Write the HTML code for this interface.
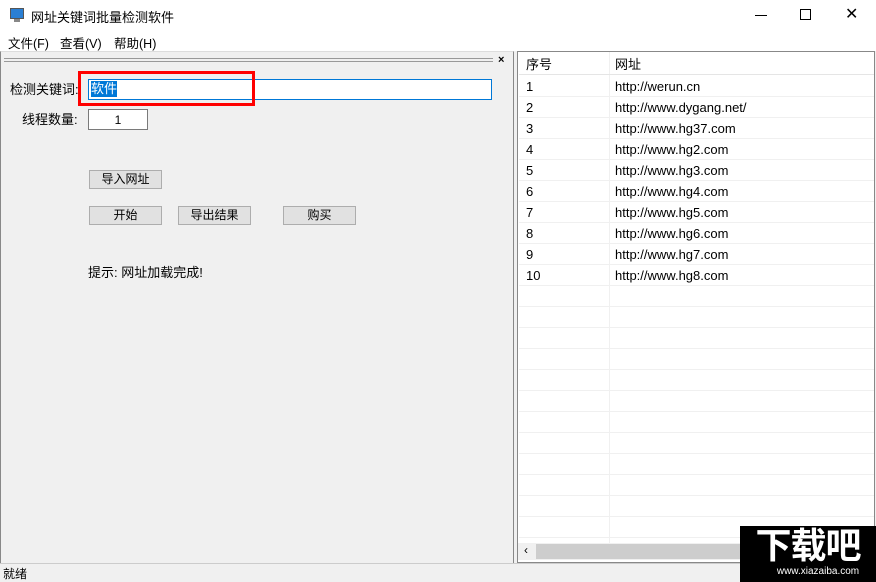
<!DOCTYPE html><html><head><meta charset="utf-8"><style>
*{margin:0;padding:0;box-sizing:border-box}
body{width:876px;height:582px;overflow:hidden;background:#f0f0f0;font-family:"Liberation Sans","Noto Sans CJK SC",sans-serif;font-size:12px;color:#000;position:relative}
.a{position:absolute}
.btn{position:absolute;background:#e1e1e1;border:1px solid #adadad;text-align:center;line-height:17px;font-size:12px;height:19px;width:73px}
.row{position:absolute;left:519px;width:355px;height:21px;border-bottom:1px solid #f0f0f0;font-size:13px;line-height:21px}
.row span{position:absolute;left:7px}.row b{font-weight:normal;position:absolute;left:96px}
</style></head><body>
<div class="a" style="left:0;top:0;width:876px;height:32px;background:#fff"></div>
<div class="a" style="left:10px;top:8px;width:14px;height:11px;background:#2a7fd4;border:1px solid #555"></div>
<div class="a" style="left:14px;top:19px;width:6px;height:3px;background:#888"></div>
<div class="a" style="left:31px;top:7px;font-size:13px">网址关键词批量检测软件</div>
<div class="a" style="left:755px;top:15px;width:12px;height:1px;background:#000"></div>
<div class="a" style="left:800px;top:9px;width:11px;height:11px;border:1px solid #000"></div>
<div class="a" style="left:845px;top:4px;font-size:16px;font-weight:300">✕</div>
<div class="a" style="left:0;top:32px;width:876px;height:19px;background:#fff"></div>
<div class="a" style="left:8px;top:33px;font-size:12.5px">文件(F)</div>
<div class="a" style="left:60px;top:33px;font-size:12.5px">查看(V)</div>
<div class="a" style="left:114px;top:33px;font-size:12.5px">帮助(H)</div>
<div class="a" style="left:0;top:51px;width:514px;height:512px;border-left:1px solid #888;border-right:1px solid #888;border-top:1px solid #ddd"></div>
<div class="a" style="left:4px;top:58px;width:489px;height:4px;border-top:1px solid #999;border-bottom:1px solid #999"></div>
<div class="a" style="left:498px;top:54px;font-size:11px;font-weight:bold">×</div>
<div class="a" style="left:10px;top:79px;font-size:13px">检测关键词:</div>
<div class="a" style="left:88px;top:79px;width:404px;height:21px;background:#fff;border:1px solid #0078d7"></div>
<div class="a" style="left:91px;top:81px;height:16px;line-height:16px;background:#0078d7;color:#fff;font-size:13px">软件</div>
<div class="a" style="left:78px;top:71px;width:177px;height:35px;border:3px solid #f00"></div>
<div class="a" style="left:22px;top:109px;font-size:13px">线程数量:</div>
<div class="a" style="left:88px;top:109px;width:60px;height:21px;background:#fff;border:1px solid #7a7a7a;text-align:center;line-height:20px">1</div>
<div class="btn" style="left:89px;top:170px">导入网址</div>
<div class="btn" style="left:89px;top:206px">开始</div>
<div class="btn" style="left:178px;top:206px">导出结果</div>
<div class="btn" style="left:283px;top:206px">购买</div>
<div class="a" style="left:88px;top:262px;font-size:13px">提示: 网址加载完成!</div>
<div class="a" style="left:517px;top:51px;width:358px;height:512px;background:#fff;border:1px solid #888"></div>
<div class="a" style="left:609px;top:52px;width:1px;height:492px;background:#f0f0f0"></div>
<div class="row" style="top:54px;border-bottom:1px solid #e5e5e5"><span>序号</span><b>网址</b></div>
<div class="row" style="top:76px"><span>1</span><b>http://werun.cn</b></div>
<div class="row" style="top:97px"><span>2</span><b>http://www.dygang.net/</b></div>
<div class="row" style="top:118px"><span>3</span><b>http://www.hg37.com</b></div>
<div class="row" style="top:139px"><span>4</span><b>http://www.hg2.com</b></div>
<div class="row" style="top:160px"><span>5</span><b>http://www.hg3.com</b></div>
<div class="row" style="top:181px"><span>6</span><b>http://www.hg4.com</b></div>
<div class="row" style="top:202px"><span>7</span><b>http://www.hg5.com</b></div>
<div class="row" style="top:223px"><span>8</span><b>http://www.hg6.com</b></div>
<div class="row" style="top:244px"><span>9</span><b>http://www.hg7.com</b></div>
<div class="row" style="top:265px"><span>10</span><b>http://www.hg8.com</b></div>
<div class="row" style="top:286px"></div><div class="row" style="top:307px"></div><div class="row" style="top:328px"></div><div class="row" style="top:349px"></div><div class="row" style="top:370px"></div><div class="row" style="top:391px"></div><div class="row" style="top:412px"></div><div class="row" style="top:433px"></div><div class="row" style="top:454px"></div><div class="row" style="top:475px"></div><div class="row" style="top:496px"></div><div class="row" style="top:517px"></div>
<div class="a" style="left:518px;top:543px;width:356px;height:17px;background:#f0f0f0"></div>
<div class="a" style="left:536px;top:544px;width:210px;height:15px;background:#cdcdcd"></div>
<div class="a" style="left:524px;top:543px;font-size:12px">‹</div>
<div class="a" style="left:0;top:563px;width:876px;height:19px;background:#f0f0f0;border-top:1px solid #ccc"></div>
<div class="a" style="left:3px;top:565px;font-size:12px">就绪</div>
<div class="a" style="left:740px;top:526px;width:136px;height:56px;background:#000;color:#fff;text-align:center">
<div style="font-size:36px;font-weight:bold;line-height:40px;letter-spacing:-1px">下载吧</div>
<div style="font-size:10px;line-height:12px;padding-left:20px">www.xiazaiba.com</div></div>
</body></html>
